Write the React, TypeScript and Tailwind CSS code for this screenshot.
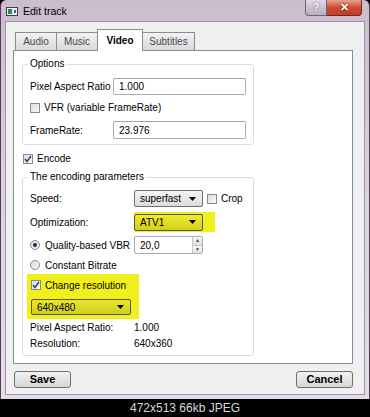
import type { ReactNode } from 'react';

/** Small Win7 style checkbox. */
function CheckBox({ checked }: { checked?: boolean }) {
  return (
    <span className="flex h-[10px] w-[10px] shrink-0 items-center justify-center border border-[#8a8a8a] bg-gradient-to-br from-[#dcdcdc] to-[#fafafa]">
      {checked && (
        <svg width="8" height="8" viewBox="0 0 8 8">
          <path d="M1 4 L3 6.5 L7 1" fill="none" stroke="#21417a" strokeWidth="1.4" />
        </svg>
      )}
    </span>
  );
}

/** Radio button. */
function Radio({ checked }: { checked?: boolean }) {
  return (
    <span className="flex h-[10px] w-[10px] shrink-0 items-center justify-center rounded-full border border-[#8a8a8a] bg-gradient-to-br from-[#d8d8d8] to-[#fafafa]">
      {checked && <span className="h-[4px] w-[4px] rounded-full bg-[#1d2f4f]" />}
    </span>
  );
}

function Arrow() {
  return (
    <svg width="7" height="4" viewBox="0 0 7 4" className="shrink-0">
      <path d="M0 0 H7 L3.5 4 Z" fill="#000" />
    </svg>
  );
}

/** Read-only dropdown, drawn like a button. */
function Combo({ value, className }: { value: string; className: string }) {
  return (
    <div className={`flex items-center justify-between rounded-[2px] border pl-[5px] pr-[6px] ${className}`}>
      <span>{value}</span>
      <Arrow />
    </div>
  );
}

function TextInput({ value, className = '' }: { value: string; className?: string }) {
  return (
    <div className={`flex items-center rounded-[2px] border border-[#abadb3] border-t-[#a0a4aa] bg-white pl-[5px] ${className}`}>
      {value}
    </div>
  );
}

function Group({ title, children }: { title: string; children: ReactNode }) {
  return (
    <fieldset className="w-[232px] rounded-[3px] border border-[#d5dfe5] px-[7px]">
      <legend className="-ml-[2px] px-[2px] leading-[12px]">{title}</legend>
      {children}
    </fieldset>
  );
}

export default function App() {
  const tabs = ['Audio', 'Music', 'Video', 'Subtitles'];
  const widths = ['w-[42px]', 'w-[42px]', 'w-[46px]', 'w-[53px]'];

  return (
    <div className="flex h-[417px] w-[370px] flex-col bg-black text-[10px] text-black" style={{ fontFamily: '"Liberation Sans", Arial, sans-serif' }}>
      <div className="flex h-[400px] flex-col rounded-t-[6px] border-x border-[#4d3f52] bg-gradient-to-b from-[#cbbdcd] via-[#ddd2df] to-[#e6dde8] px-[4px] pb-[4px]">
        {/* title bar */}
        <div className="flex h-[21px] shrink-0 items-start">
          <div className="mt-[7px] ml-[1px] flex h-[9px] w-[12px] items-center border border-[#3d3d60] bg-[#e8f0f0]">
            <span className="ml-[1px] h-[5px] w-[4px] bg-[#2c8a4a]" />
            <span className="ml-[2px] h-[3px] w-[2px] bg-[#3060b0]" />
          </div>
          <span className="mt-[5px] ml-[5px] text-[10.5px] leading-[12px]">Edit track</span>
          <div className="ml-auto mr-[3px] flex">
            <div className="flex h-[16px] w-[22px] items-center justify-center rounded-bl-[4px] border border-t-0 border-[#6e6478] bg-gradient-to-b from-[#e0d8e4] to-[#b9aec0] text-[10px] font-bold leading-none text-white [text-shadow:0_0_2px_#444]">
              ?
            </div>
            <div className="flex h-[16px] w-[35px] items-center justify-center rounded-br-[4px] border border-t-0 border-l-0 border-[#6b2a24] bg-gradient-to-b from-[#e4a294] via-[#cc4a32] to-[#c43c24] text-[11px] font-bold leading-none text-white [text-shadow:0_0_2px_#400]">
              ✕
            </div>
          </div>
        </div>

        {/* client area */}
        <div className="flex flex-1 flex-col border border-[#9c94a3] bg-[#f0f0f0] pr-[11px] pl-[7px]">
          {/* tabs */}
          <div className="mt-[7px] ml-[2px] flex h-[21px] items-end">
            {tabs.map((tab, i) =>
              tab === 'Video' ? (
                <div
                  key={tab}
                  className={`relative z-10 -mb-px -ml-px flex h-[22px] items-center justify-center border border-b-0 border-[#898c95] bg-white font-bold ${widths[i]}`}
                >
                  {tab}
                </div>
              ) : (
                <div
                  key={tab}
                  className={`flex h-[18px] items-center justify-center border border-b-0 border-[#898c95] bg-gradient-to-b from-[#f2f2f2] to-[#d9d9d9] text-[#4a4a4a] ${widths[i]} ${i > 0 ? '-ml-px' : ''}`}
                >
                  {tab}
                </div>
              ),
            )}
          </div>

          {/* pane */}
          <div className="flex-1 border border-[#898c95] bg-white pt-[7px] pl-[8px]">
            <Group title="Options">
              <div className="pt-[8px] pb-[5px]">
                <div className="flex h-[17px] items-center">
                  <span className="w-[83px]">Pixel Aspect Ratio</span>
                  <TextInput value="1.000" className="h-[17px] flex-1" />
                </div>
                <div className="mt-[6px] flex h-[13px] items-center gap-[4px]">
                  <CheckBox />
                  <span>VFR (variable FrameRate)</span>
                </div>
                <div className="mt-[7px] flex h-[18px] items-center">
                  <span className="w-[83px]">FrameRate:</span>
                  <TextInput value="23.976" className="h-[18px] flex-1" />
                </div>
              </div>
            </Group>

            <div className="mt-[7px] ml-[1px] flex h-[13px] items-center gap-[4px]">
              <CheckBox checked />
              <span>Encode</span>
            </div>

            <div className="mt-[6px]">
              <Group title="The encoding parameters">
                <div className="pt-[7px] pb-[6px]">
                  <div className="flex h-[17px] items-center">
                    <span className="w-[104px]">Speed:</span>
                    <Combo value="superfast" className="h-[17px] w-[69px] border-[#707070] bg-gradient-to-b from-[#f4f4f4] to-[#dcdcdc]" />
                    <span className="ml-[4px]">
                      <CheckBox />
                    </span>
                    <span className="ml-[4px]">Crop</span>
                  </div>

                  <div className="mt-[5px] flex h-[20px] items-center">
                    <span className="w-[104px]">Optimization:</span>
                    <div className="flex h-[20px] w-[81px] items-center bg-[#f2f01c]">
                      <Combo value="ATV1" className="h-[17px] w-[69px] border-[#5c5a1a] bg-gradient-to-b from-[#eeec2a] to-[#d2d01c]" />
                    </div>
                  </div>

                  <div className="mt-[4px] flex h-[18px] items-center">
                    <span className="flex w-[104px] items-center gap-[5px]">
                      <Radio checked />
                      <span>Quality-based VBR</span>
                    </span>
                    <div className="flex h-[18px] w-[69px] items-center justify-between rounded-[2px] border border-[#abadb3] bg-white pl-[5px]">
                      <span>20,0</span>
                      <div className="flex h-full w-[10px] flex-col border-l border-[#c8c8c8]">
                        <span className="flex flex-1 items-center justify-center bg-gradient-to-b from-[#f6f6f6] to-[#e2e2e2] text-[5px] leading-none text-[#445]">▲</span>
                        <span className="flex flex-1 items-center justify-center border-t border-[#c8c8c8] bg-gradient-to-b from-[#f6f6f6] to-[#e2e2e2] text-[5px] leading-none text-[#445]">▼</span>
                      </div>
                    </div>
                  </div>

                  <div className="mt-[5px] flex h-[12px] items-center gap-[5px]">
                    <Radio />
                    <span>Constant Bitrate</span>
                  </div>

                  <div className="mt-[3px] -ml-[3px] w-[112px] bg-[#f2f01c] pt-[5px] pb-[4px] pl-[4px]">
                    <div className="flex h-[12px] items-center gap-[4px]">
                      <CheckBox checked />
                      <span>Change resolution</span>
                    </div>
                    <Combo value="640x480" className="mt-[8px] h-[16px] w-[100px] border-[#5c5a1a] bg-gradient-to-b from-[#e8e62a] to-[#d0ce1e]" />
                  </div>

                  <div className="mt-[2px] flex h-[12px] items-center">
                    <span className="w-[104px]">Pixel Aspect Ratio:</span>
                    <span>1.000</span>
                  </div>
                  <div className="mt-[4px] flex h-[12px] items-center">
                    <span className="w-[104px]">Resolution:</span>
                    <span>640x360</span>
                  </div>
                </div>
              </Group>
            </div>
          </div>

          {/* buttons */}
          <div className="mt-[7px] mb-[6px] flex justify-between pl-[1px]">
            <button className="h-[17px] w-[57px] rounded-[3px] border border-[#707070] bg-gradient-to-b from-[#f2f2f2] to-[#d6d6d6] text-[11px] font-bold leading-none">
              Save
            </button>
            <button className="h-[17px] w-[57px] rounded-[3px] border border-[#707070] bg-gradient-to-b from-[#f2f2f2] to-[#d6d6d6] text-[11px] font-bold leading-none">
              Cancel
            </button>
          </div>
        </div>
      </div>

      {/* image caption */}
      <div className="flex flex-1 items-center justify-center text-[12px] text-[#d8d8d8]">472x513 66kb JPEG</div>
    </div>
  );
}
